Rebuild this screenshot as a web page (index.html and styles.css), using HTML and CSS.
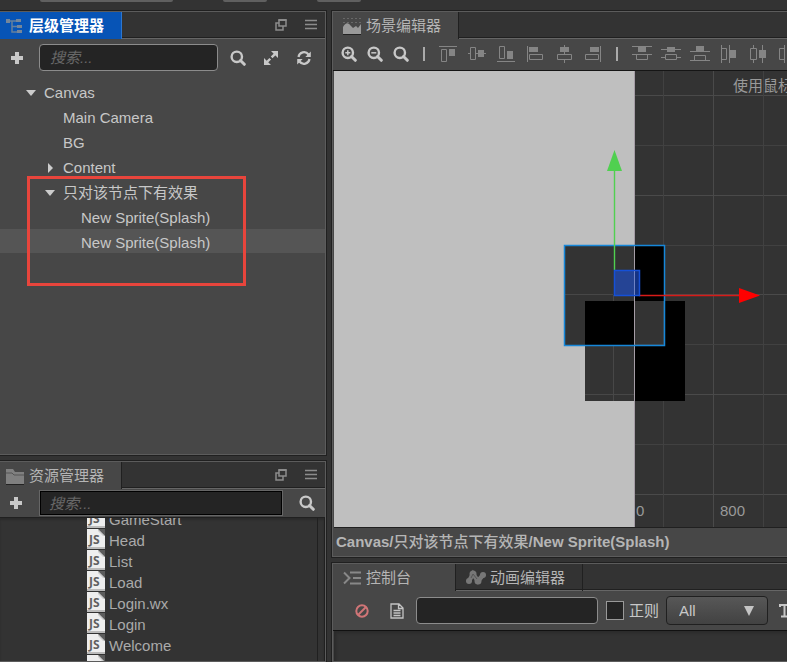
FILE: index.html
```html
<!DOCTYPE html>
<html lang="zh-CN">
<head>
<meta charset="utf-8">
<title>场景编辑器</title>
<link rel="stylesheet" href="styles.css">
</head>
<body>
<svg class="defs" aria-hidden="true">
  <defs>
    <symbol id="search" viewBox="0 0 16 16"><circle cx="6.8" cy="6.8" r="5.2" fill="none" stroke="currentColor" stroke-width="2.4"/><path d="M10.5 10.500 14.300 14.300" stroke="currentColor" stroke-width="3" stroke-linecap="round"/></symbol>
    <symbol id="plus" viewBox="0 0 14 14"><path d="M7 1v12M1 7h12" stroke="currentColor" stroke-width="4"/></symbol>
    <symbol id="popout" viewBox="0 0 14 14"><g fill="none" stroke="currentColor" stroke-width="1.5"><path d="M5 2h7v6H5zM5 5H2v7h7V8"/></g><path d="M4.500 2h8" stroke="currentColor" stroke-width="2"/></symbol>
    <symbol id="menu" viewBox="0 0 14 14"><path d="M1 2.500h12M1 6.500h12M1 10.500h12" stroke="currentColor" stroke-width="1.600"/></symbol>
    <symbol id="js" viewBox="0 0 18 20"><path d="M0 0h11l7 7v13H0z" fill="#eee"/><path d="M11 0h7v7z" fill="#5c5c5c"/><path d="M11 0v2l5 5h2z" fill="#ccc"/><path d="M0 19h18" stroke="#aaa" stroke-width="1.500"/><text class="js" x="2" y="15">JS</text></symbol>
  </defs>
</svg>

<header class="strip"><span class="strip-wide"></span><span class="strip-small"></span><span class="strip-small"></span></header>

<main class="app">
  <div class="side">
    <section class="panel">
      <div class="tabs">
        <button class="tab tab-focus"><svg class="tab-icon" viewBox="0 0 18 18"><path d="M4 4h6M6 4v11h5M6 9.500h5" fill="none" stroke="#67809c" stroke-width="1.500"/><path d="M0 2h4v4H0zM10 2h5v3h-5zM11 8h5v3h-5zM11 13h5v3h-5z" fill="#75869a"/></svg>层级管理器</button>
        <div class="tab-tools"><button class="tool dim" aria-label="弹出"><svg><use href="#popout"/></svg></button><button class="tool dim" aria-label="菜单"><svg><use href="#menu"/></svg></button></div>
      </div>
      <div class="bar bar-tree">
        <button class="tool" aria-label="新建"><svg><use href="#plus"/></svg></button>
        <input class="field grow" type="text" placeholder="搜索..." aria-label="搜索节点">
        <div class="bar-tools">
          <button class="icon" aria-label="搜索"><svg><use href="#search"/></svg></button>
          <button class="icon" aria-label="展开"><svg viewBox="0 0 16 16"><path d="M4 12 12 4" stroke="currentColor" stroke-width="2.400" stroke-dasharray="4.600 2"/><path d="M8 1h7v7zM1 8v7h7z" fill="currentColor"/></svg></button>
          <button class="icon" aria-label="刷新"><svg viewBox="0 0 16 16"><path d="M2.500 7a5.600 5.600 0 0 1 10-2.500M13.500 9a5.600 5.600 0 0 1-10 2.500" fill="none" stroke="currentColor" stroke-width="2.200"/><path d="M14.800 1.500v5.500H9.300zM1.200 14.500V9h5.500z" fill="currentColor"/></svg></button>
        </div>
      </div>
      <ul class="tree">
        <li class="node level-0"><svg class="arrow" viewBox="0 0 10 10"><path d="M0 2h10L5 8z"/></svg>Canvas</li>
        <li class="node level-1"><span class="arrow"></span>Main Camera</li>
        <li class="node level-1"><span class="arrow"></span>BG</li>
        <li class="node level-1"><svg class="arrow" viewBox="0 0 10 10"><path d="M3 0v10l5-5z"/></svg>Content</li>
        <li class="node level-1"><svg class="arrow" viewBox="0 0 10 10"><path d="M0 2h10L5 8z"/></svg>只对该节点下有效果</li>
        <li class="node level-2"><span class="arrow"></span>New Sprite(Splash)</li>
        <li class="node level-2 selected"><span class="arrow"></span>New Sprite(Splash)</li>
      </ul>
      <div class="marker"></div>
    </section>

    <section class="panel">
      <div class="tabs">
        <button class="tab"><svg class="tab-icon" viewBox="0 0 18 18"><path d="M0 2h7l2 3h9v12H0z" fill="#808080"/><path d="M0 6h6l2 2h10" fill="none" stroke="#555"/><path d="M0 17.500h18" stroke="#222"/></svg>资源管理器</button>
        <div class="tab-tools"><button class="tool dim" aria-label="弹出"><svg><use href="#popout"/></svg></button><button class="tool dim" aria-label="菜单"><svg><use href="#menu"/></svg></button></div>
      </div>
      <div class="bar bar-assets">
        <button class="tool" aria-label="新建"><svg><use href="#plus"/></svg></button>
        <input class="field field-square grow" type="text" placeholder="搜索..." aria-label="搜索资源">
        <button class="icon" aria-label="搜索"><svg><use href="#search"/></svg></button>
      </div>
      <div class="assets">
        <ul class="files">
          <li class="file"><svg><use href="#js"/></svg>GameStart</li>
          <li class="file"><svg><use href="#js"/></svg>Head</li>
          <li class="file"><svg><use href="#js"/></svg>List</li>
          <li class="file"><svg><use href="#js"/></svg>Load</li>
          <li class="file"><svg><use href="#js"/></svg>Login.wx</li>
          <li class="file"><svg><use href="#js"/></svg>Login</li>
          <li class="file"><svg><use href="#js"/></svg>Welcome</li>
          <li class="file"><svg><use href="#js"/></svg></li>
        </ul>
      </div>
    </section>
  </div>

  <div class="work">
    <section class="panel">
      <div class="tabs">
        <button class="tab tab-scene"><svg class="tab-icon" viewBox="0 0 18 18"><path d="M0 17V10q4-7 8-1l2 2 3-2 2 2 3-4v10z" fill="#999"/><path d="M0 1.500h18M0 5.500h18" stroke="#686868" stroke-dasharray="2 2"/><path d="M0 17.500h18" stroke="#222"/></svg>场景编辑器</button>
      </div>
      <div class="bar bar-scene">
        <div class="zooms">
          <button class="icon" aria-label="放大"><svg viewBox="0 0 16 16"><use href="#search"/><path d="M4.300 6.800h5M6.800 4.300v5" stroke="currentColor" stroke-width="1.500"/></svg></button>
          <button class="icon" aria-label="缩小"><svg viewBox="0 0 16 16"><use href="#search"/><path d="M4.300 6.800h5" stroke="currentColor" stroke-width="1.500"/></svg></button>
          <button class="icon" aria-label="还原"><svg><use href="#search"/></svg></button>
        </div>
        <span class="rule"></span>
        <div class="aligns">
          <button class="align" aria-label="上对齐"><svg viewBox="0 0 18 18"><path class="l" d="M0 1.500h18M2.500 4.500h5v12h-5z"/><path class="f" d="M10 4h6v7h-6z"/></svg></button>
          <button class="align" aria-label="垂直居中"><svg viewBox="0 0 18 18"><path class="l" d="M0 8.500h2M8 8.500h10M2.500 2.500h5v12h-5z"/><path class="f" d="M10 5h6v7h-6z"/></svg></button>
          <button class="align" aria-label="下对齐"><svg viewBox="0 0 18 18"><path class="l" d="M0 16.500h18M2.500 1.500h5v12h-5z"/><path class="f" d="M10 6h6v8h-6z"/></svg></button>
          <button class="align" aria-label="左对齐"><svg viewBox="0 0 18 18"><path class="l" d="M1.500 1v16M3.500 9.500h13v5h-13z"/><path class="f" d="M3 2h9v5H3z"/></svg></button>
          <button class="align" aria-label="水平居中"><svg viewBox="0 0 18 18"><path class="l" d="M9.500 0v9M9.500 15v3M2.500 9.500h14v5h-14z"/><path class="f" d="M5 2h9v5H5z"/></svg></button>
          <button class="align" aria-label="右对齐"><svg viewBox="0 0 18 18"><path class="l" d="M16.500 1v16M1.500 9.500h13v5h-13z"/><path class="f" d="M6 2h9v5H6z"/></svg></button>
        </div>
        <span class="rule"></span>
        <div class="aligns aligns-wide">
          <button class="align" aria-label="上分布"><svg viewBox="0 0 20 18"><path class="l" d="M0 1.500h20M0 9.500h20M4.500 9.500h11v5h-11z"/><path class="f" d="M6 2h8v5H6z"/></svg></button>
          <button class="align" aria-label="中分布"><svg viewBox="0 0 20 18"><path class="l" d="M0 4.500h20M0 12.500h4M16 12.500h4M4.500 9.500h11v5h-11z"/><path class="f" d="M6 2h8v5H6z"/></svg></button>
          <button class="align" aria-label="下分布"><svg viewBox="0 0 20 18"><path class="l" d="M0 6.500h20M0 15.500h20M4.500 10.500h11v5h-11z"/><path class="f" d="M6 1h8v6H6z"/></svg></button>
          <button class="align" aria-label="左分布"><svg viewBox="0 0 20 18"><path class="l" d="M2.500 0v18M10.500 0v18M2.500 3.500h5v11h-5z"/><path class="f" d="M11 5h6v8h-6z"/></svg></button>
          <button class="align" aria-label="中心分布"><svg viewBox="0 0 20 18"><path class="l" d="M5.500 0v3M5.500 15v3M14.500 0v18M2.500 3.500h6v11h-6z"/><path class="f" d="M11 5h7v8h-7z"/></svg></button>
          <button class="align" aria-label="右分布"><svg viewBox="0 0 20 18"><path class="l" d="M7.500 0v18M15.500 0v18M2.500 3.500h5v11h-5z"/><path class="f" d="M10 5h6v8h-6z"/></svg></button>
        </div>
      </div>
      <div class="scene">
        <svg class="canvas">
          <g transform="translate(-334 -71)">
            <path d="M634 95.500H1600M634 195.500H1600M634 294.500H1600M634 394.500H1600M634 494.500H1600M713.500 70V900" stroke="#4a4a4a"/>
            <path d="M634 145.500H1600M634 245.500H1600M634 344.500H1600M634 444.500H1600M663.500 70V900M763.500 70V900" stroke="#414141"/>
            <text class="tick" x="636" y="516">0</text>
            <text class="tick" x="720" y="516">800</text>
            <text class="hint" x="733" y="91">使用鼠标</text>
            <path d="M334 70h300v830H334z" fill="#bfbfbf"/>
            <path d="M564 245h71v101h-71zM585 345h50v56h-50z" fill="#333"/>
            <path d="M635 245h30v56h-30zM585 301h50v45h-50zM665 301h20v100h-50v-55h30z"/>
            <path d="M565 294.500h48M613.500 295v6M613.500 346v55M585 394.500h50" stroke="#474747"/>
            <path d="M634.500 70V900" stroke="#a59da6"/>
            <path d="M564.500 245.500h100v100h-100z" fill="none" stroke="#1687d9" stroke-width="1.500"/>
            <path d="M614.500 170v100" stroke="#50d050" stroke-width="1.400"/><path d="M607 171h15l-7.500-21z" fill="#50d050"/>
            <path d="M639 295.500h101" stroke="#d81b18" stroke-width="1.400"/><path d="M739 288v15l21-7.500z" fill="#f00"/>
            <path d="M614.500 270.500h25v25h-25z" fill="#1f4ecb" fill-opacity=".65" stroke="#1550d8" stroke-width="1.500"/><path d="M634.500 271v24" stroke="#6f83c6"/>
          </g>
        </svg>
      </div>
      <footer class="path">Canvas/<span class="cjk">只对该节点下有效果</span>/New Sprite(Splash)</footer>
    </section>

    <section class="panel">
      <div class="tabs">
        <button class="tab tab-console"><svg class="tab-icon" viewBox="0 0 18 18"><path d="M1 3.500 6.500 9 1 14.500M7 3.500h11M10 9h8M7 14.500h11" fill="none" stroke="#888" stroke-width="2"/></svg>控制台</button>
        <button class="tab tab-off"><svg class="tab-icon tab-icon-wide" viewBox="0 0 20 18"><path d="M3 12 7 5l5 7 5-6" fill="none" stroke="#777" stroke-width="4.500"/><g fill="#777"><circle cx="3" cy="12" r="3"/><circle cx="7" cy="5" r="3.500"/><circle cx="12" cy="12" r="3.500"/><circle cx="17" cy="6" r="3"/></g><path d="m5 9 2-4 4 5" fill="none" stroke="#555"/></svg>动画编辑器</button>
      </div>
      <div class="bar bar-console">
        <button class="icon" aria-label="清除"><svg viewBox="0 0 16 16"><path d="M12 4 4 12" stroke="#d07577" stroke-width="2"/><circle cx="8" cy="8" r="5.700" fill="none" stroke="#d07577" stroke-width="2"/></svg></button>
        <button class="icon" aria-label="日志"><svg viewBox="0 0 16 16"><path d="M2 1h8l4 4v10H2zM9.500 1v4.500H14M4.500 7.500h7M4.500 10h7M4.500 12.500h7" fill="none" stroke="#c4c4c4" stroke-width="1.300"/></svg></button>
        <input class="field filter" type="text" aria-label="过滤">
        <label class="regex"><input class="check" type="checkbox">正则</label>
        <span class="picker"><select class="select" aria-label="日志级别"><option>All</option></select><svg class="caret" viewBox="0 0 10 10"><path d="M0 0h10L5 10z"/></svg></span>
        <button class="icon" aria-label="字号"><svg viewBox="0 0 16 16"><path d="M1 4V2h9v2M5.500 2v11M2 13.500h7M13 3v10" fill="none" stroke="currentColor" stroke-width="2"/><path d="M10.500 4.500 13 1l2.500 3.500zM10.500 11.500 13 15l2.500-3.500z" fill="currentColor"/></svg></button>
      </div>
      <div class="log"></div>
    </section>
  </div>
</main>
</body>
</html>
```
FILE: styles.css
```css
* { box-sizing: border-box; }

body {
  margin: 0;
  height: 100vh;
  display: flex;
  flex-direction: column;
  overflow: hidden;
  background: #333;
  color: #c8c8c8;
  font: 15px/20px "Liberation Sans", "Noto Sans CJK SC", sans-serif;
}

ul { list-style: none; margin: 0; padding: 0; }
button, input, select { font: inherit; color: inherit; margin: 0; }
button { border: 0; padding: 0; background: none; flex: none; }
svg { display: block; }
.defs { position: absolute; width: 0; height: 0; }

.strip { flex: none; height: 11px; display: flex; gap: 50px; padding-left: 40px; }
.strip span { height: 2px; background: #606060; border-radius: 0 0 2px 2px; }
.strip-wide { width: 133px; }
.strip-small { width: 44px; }

.app { flex: 1; min-height: 0; display: grid; grid-template-columns: 326px minmax(0, 1fr); gap: 6px; }
.side, .work { display: grid; gap: 6px; min-height: 0; min-width: 0; }
.side { grid-template-rows: minmax(0, 1fr) 201px; }
.work { grid-template-rows: minmax(0, 1fr) 99px; }

.panel {
  position: relative;
  display: flex;
  flex-direction: column;
  min-width: 0;
  min-height: 0;
  background: #474747;
  border: 1px solid #5c5c5c;
  box-shadow: 0 0 0 1px #202020;
}
.side .panel { border-left: 0; }
.work .panel { border-right: 0; }

.tabs {
  flex: none;
  display: flex;
  height: 27px;
  background: #333;
  box-shadow: inset 0 -1px #666, inset 0 -2px #202020;
}
.tab {
  display: flex;
  align-items: center;
  gap: 5px;
  padding: 0 17px 0 6px;
  background: #474747;
  border-right: 1px solid #202020;
  color: #b5b5b5;
}
.tab-focus { background: #0754b6; color: #fff; font-weight: bold; border-right-color: #2c76cf; }
.tab-scene { padding-left: 10px; }
.tab-console { padding-left: 10px; padding-right: 44px; }
.tab-off { background: none; padding-left: 10px; box-shadow: inset 0 -1px #666, inset 0 -2px #202020; }
.tab-icon { width: 18px; height: 18px; margin-top: 1px; }
.tab-icon-wide { width: 20px; margin-right: -1px; }
.tab-tools { margin-left: auto; display: flex; align-items: center; gap: 16px; padding: 0 7px 2px 0; }

.tool, .tool svg { width: 14px; height: 14px; }
.icon, .icon svg { width: 16px; height: 16px; }
.dim { color: #8c8c8c; }

.bar { flex: none; display: flex; align-items: center; }
.bar-tree { height: 38px; padding: 0 13px 1px 10px; gap: 15px; }
.bar-assets { height: 29px; padding: 0 10px 0 9px; gap: 17px; border-bottom: 1px solid #202020; }
.bar-tools { display: flex; gap: 17px; margin-left: -3px; }
.bar-scene { height: 32px; padding: 0 0 2px 8px; overflow: hidden; border-bottom: 1px solid #151515; }
.bar-console { height: 40px; padding-left: 21px; overflow: hidden; border-bottom: 1px solid #111; }
.bar-console > .icon + .icon { margin-left: 19px; }
.grow { flex: 1; min-width: 0; }

.field {
  height: 27px;
  padding: 0 10px;
  background: #242424;
  border: 1px solid #8c8c8c;
  border-radius: 4px;
  outline: 0;
}
.field::placeholder { color: #686868; font-style: italic; opacity: 1; }
.field-square { height: 24px; padding: 0 8px; border-color: #000; border-radius: 0; box-shadow: 0 0 0 1px #666; }

.tree { margin-top: 2px; display: flex; flex-direction: column; gap: 1px; }
.node { display: flex; align-items: center; gap: 8px; height: 24px; padding-top: 4px; }
.arrow { width: 10px; height: 10px; fill: #ccc; }
.level-0 { padding-left: 26px; }
.level-1 { padding-left: 45px; }
.level-2 { padding-left: 63px; }
.selected { background: #555; }
.marker { position: absolute; left: 27px; top: 164px; width: 219px; height: 110px; border: 3px solid #e8453c; }

.assets { flex: 1; min-height: 0; overflow: hidden; background: #333; border-right: 1px solid #202020; display: flex; box-shadow: inset 0 2px 2px #2b2b2b; }
.files { flex: 1; margin: -10px 6px 0 0; padding-left: 87px; border-right: 1px solid #202020; }
.file { display: flex; align-items: center; gap: 4px; height: 21px; padding-top: 3px; color: #aaa; }
.file svg { width: 18px; height: 20px; margin-top: -4px; }
.js { font: bold 12px "Open Sans", sans-serif; fill: #606060; }

.zooms { display: flex; gap: 10px; }
.aligns { display: flex; gap: 11px; }
.align, .align svg { width: 18px; height: 18px; }
.aligns-wide { gap: 9px; }
.aligns-wide .align, .aligns-wide svg { width: 20px; }
.l { fill: none; stroke: #858585; }
.f { fill: #858585; }
.rule { flex: none; width: 30px; height: 14px; background: linear-gradient(#aaa, #aaa) center / 2px 14px no-repeat; }

.scene { flex: 1; min-height: 0; margin-left: 1px; background: #333; border-bottom: 1px solid #202020; }
.canvas { width: 100%; height: 100%; }
.tick { fill: #999; font: 15px "Liberation Sans", sans-serif; }
.hint { fill: #999; font: 15px "Noto Sans CJK SC", sans-serif; }
.path { flex: none; height: 28px; line-height: 28px; padding-left: 3px; font-weight: bold; color: #b5b5b5; white-space: nowrap; }
.cjk { font-weight: 500; }

.filter { width: 182px; margin-left: 11px; }
.regex { display: flex; align-items: center; gap: 5px; margin-left: 8px; white-space: nowrap; }
.check { appearance: none; width: 18px; height: 19px; background: #242424; border: 1px solid #999; }
.picker { display: grid; align-items: center; margin-left: 7px; flex: none; }
.select { grid-area: 1 / 1; width: 102px; height: 29px; padding: 0 12px; appearance: none; border: 1px solid #202020; border-radius: 4px; background: linear-gradient(#575757, #424242); }
.caret { grid-area: 1 / 1; justify-self: end; margin-right: 14px; width: 10px; height: 10px; fill: #c4c4c4; pointer-events: none; }
.picker + .icon { margin-left: 11px; }
.log { flex: 1; margin-left: 1px; background: #333; box-shadow: inset 2px 2px 3px #2a2a2a; }
```
